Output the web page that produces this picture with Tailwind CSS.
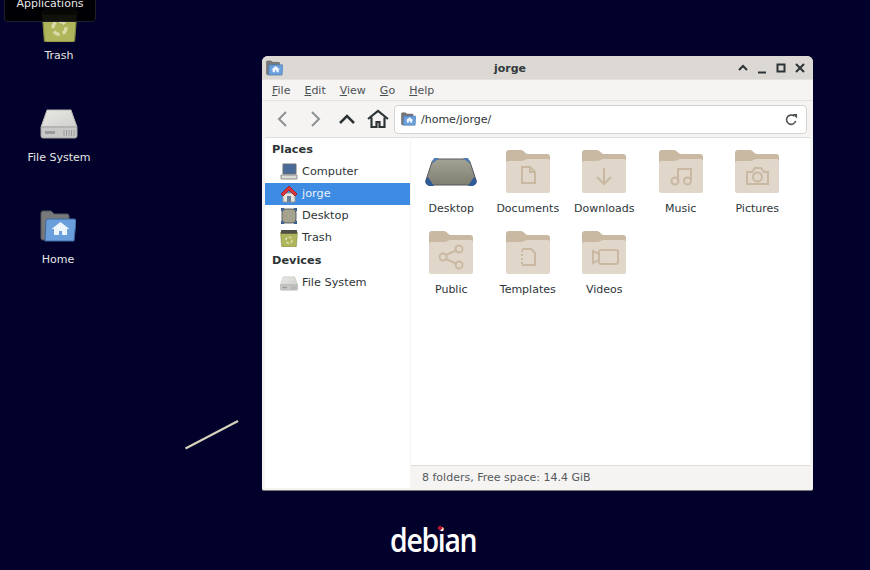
<!DOCTYPE html>
<html lang="en">

<head>
    <meta charset="UTF-8">
    <meta name="viewport" content="width=device-width, initial-scale=1.0">
    <title>jorge - Desktop</title>
    <script src="https://cdn.jsdelivr.net/npm/@tailwindcss/browser@4"></script>
</head>

<body class="relative w-[870px] h-[570px] overflow-hidden bg-[#01012b] font-['DejaVu_Sans',sans-serif] text-[11px]">
    <!-- Shared icons -->
    <svg class="absolute w-0 h-0">
        <defs>
            <linearGradient id="pad" x1="0" y1="0" x2="0" y2="1">
                <stop offset="0" stop-color="#a3a293" />
                <stop offset="1" stop-color="#7f7f72" />
            </linearGradient>
            <linearGradient id="disk" x1="0" y1="0" x2="1" y2="1">
                <stop offset="0" stop-color="#e9e9e5" />
                <stop offset="1" stop-color="#cfcfcb" />
            </linearGradient>
        </defs>
        <symbol id="folder" viewBox="0 0 44 44">
            <path d="M0 4a3 3 0 0 1 3-3h12c3 0 4 4 7 4h19a3 3 0 0 1 3 3v6H0z" fill="#c9b9a3" />
            <path d="M0 14c0-1 1-2 2-2h13c3 0 4-2 7-2h20c1 0 2 1 2 2v30a2 2 0 0 1-2 2H2a2 2 0 0 1-2-2z" fill="#e0d6ca" />
        </symbol>
        <symbol id="home-folder" viewBox="0 0 36 32">
            <path d="M1 3a2 2 0 0 1 2-2h8l3 3h13a2 2 0 0 1 2 2v24H3a2 2 0 0 1-2-2z" fill="#77797a" stroke="#55585a" />
            <path d="M6 11a2 2 0 0 1 2-2h26a2 2 0 0 1 2 2l-2 20H5z" fill="#6a9fdc" stroke="#3f6a9e" />
            <path d="M20.500 12l9 7h-2.500v6h-5v-4h-3v4h-5v-6h-2.500z" fill="#eef4fb" />
        </symbol>
        <symbol id="drive" viewBox="0 0 38 30">
            <path d="M7 1h24l6 17H1z" fill="url(#disk)" stroke="#b5b5b2" />
            <path d="M1 18h36v9a2 2 0 0 1-2 2H3a2 2 0 0 1-2-2z" fill="#c8c8c6" stroke="#a2a2a0" />
            <path d="M5 22h10v3H5z" fill="#9a9b9c" />
            <path d="M24 21v6M26.500 21v6M29 21v6M31.500 21v6M34 21v6" stroke="#9a9b9c" />
        </symbol>
        <symbol id="trash" viewBox="0 0 34 34">
            <path d="M1 6h32l-2 26a2 2 0 0 1-2 2H5a2 2 0 0 1-2-2z" fill="#aeb55a" stroke="#7f843c" />
            <path d="M2 2h30v7H2z" fill="#4e4e45" />
            <circle cx="17" cy="21" r="6" fill="none" stroke="#d9dca8" stroke-width="3" stroke-dasharray="6 3" />
        </symbol>
        <symbol id="desktop-pad" viewBox="0 0 52 30">
            <path d="M11 2h30c2 0 3 1 4 3l6 18c1 3-1 5-4 5H5c-3 0-5-2-4-5L7 5c1-2 2-3 4-3z" fill="url(#pad)" stroke="#55585c" />
            <path d="M9 1h5l-7 6zM43 1h-5l7 6z" fill="#4a7cba" />
            <path d="M1 27c-1-2 0-5 2-7l6 9H4zM51 27c1-2 0-5-2-7l-6 9h5z" fill="#2f5a98" />
        </symbol>
    </svg>

    <!-- Desktop icons -->
    <div class="absolute left-[19px] top-[-2px] w-20 flex flex-col items-center text-[#e6e6e6]">
        <svg class="w-[37px] h-[37px] mt-[7px]"><use href="#trash" /></svg>
        <span class="mt-[6px] leading-[15px]">Trash</span>
    </div>
    <div class="absolute left-[19px] top-[109px] w-20 flex flex-col items-center text-[#e6e6e6]">
        <svg class="w-[38px] h-[30px]"><use href="#drive" /></svg>
        <span class="mt-[11px] leading-[15px]">File System</span>
    </div>
    <div class="absolute left-[18px] top-[210px] w-20 flex flex-col items-center text-[#e6e6e6]">
        <svg class="w-[36px] h-[32px]"><use href="#home-folder" /></svg>
        <span class="mt-[10px] leading-[15px]">Home</span>
    </div>

    <!-- Applications tooltip -->
    <div class="absolute left-[4px] top-[-9px] w-[92px] h-[31px] pt-[4px] bg-black/90 rounded-[4px] border border-[#20202a] text-center text-[#e6e6e6] leading-[15px]">Applications</div>

    <!-- Wallpaper streak and logo -->
    <svg class="absolute left-[180px] top-[415px] w-[64px] h-[40px]" viewBox="0 0 64 40">
        <path d="M5.500 33.500L58 6" stroke="#d8d2bc" stroke-width="2.200" fill="none" />
    </svg>
    <div class="absolute left-[390px] top-[520px] text-white font-['Open_Sans',sans-serif] font-semibold text-[33px] leading-[40px] tracking-[-1.500px] scale-x-[.86] origin-left">debian</div>
    <div class="absolute left-[438px] top-[526px] w-[4px] h-[4px] rotate-45 bg-[#b0162e]"></div>

    <!-- File manager window -->
    <div class="absolute left-[262px] top-[56px] w-[551px] h-[435px] flex flex-col bg-[#f5f4f3] rounded-t-[6px] rounded-b-[2px] border-b border-[#77777a] overflow-hidden text-[#2e3436]">
        <!-- Title bar -->
        <div class="h-[24px] shrink-0 flex items-center px-[4px] bg-[#dcd9d5] border-b border-[#e4e2df]">
            <svg class="w-[17px] h-[16px]"><use href="#home-folder" /></svg>
            <div class="flex-1 text-center font-bold text-[11px] pt-[3px] text-[#33393b]">jorge</div>
            <div class="flex items-center gap-[7px] pr-[3px]">
                <svg class="w-[12px] h-[12px]" viewBox="0 0 12 12"><path d="M2 8l4-4 4 4" fill="none" stroke="#2e3436" stroke-width="2" /></svg>
                <svg class="w-[12px] h-[12px]" viewBox="0 0 12 12"><path d="M2 10.500h8" fill="none" stroke="#2e3436" stroke-width="2" /></svg>
                <svg class="w-[12px] h-[12px]" viewBox="0 0 12 12"><path d="M2.500 2.500h7v7h-7z" fill="none" stroke="#2e3436" stroke-width="2" /></svg>
                <svg class="w-[12px] h-[12px]" viewBox="0 0 12 12"><path d="M2 2l8 8M10 2l-8 8" fill="none" stroke="#2e3436" stroke-width="2" /></svg>
            </div>
        </div>

        <!-- Menu bar -->
        <div class="h-[21px] shrink-0 flex items-center gap-[14px] px-[10px] pt-[2px] border-b border-[#e6e4e2] text-[#4c5153]">
            <span><u>F</u>ile</span>
            <span><u>E</u>dit</span>
            <span><u>V</u>iew</span>
            <span><u>G</u>o</span>
            <span><u>H</u>elp</span>
        </div>

        <!-- Toolbar -->
        <div class="h-[36px] shrink-0 flex items-center pl-[11px] pr-[6px]">
            <svg class="w-[20px] h-[20px]" viewBox="0 0 20 20"><path d="M13 3l-7 7 7 7" fill="none" stroke="#8e9192" stroke-width="2" /></svg>
            <svg class="w-[20px] h-[20px] ml-[12px]" viewBox="0 0 20 20"><path d="M7 3l7 7-7 7" fill="none" stroke="#8e9192" stroke-width="2" /></svg>
            <svg class="w-[20px] h-[20px] ml-[12px]" viewBox="0 0 20 20"><path d="M3 14l7-7 7 7" fill="none" stroke="#2e3436" stroke-width="2.500" /></svg>
            <svg class="w-[22px] h-[20px] ml-[10px]" viewBox="0 0 22 20"><path d="M1 10l10-8 10 8M4.500 8.500V18h5v-5h3v5h5V8.500" fill="none" stroke="#2e3436" stroke-width="2.200" /></svg>
            <div class="ml-[5px] flex-1 h-[29px] flex items-center pl-[6px] pr-[8px] bg-white border border-[#d5d2cf] rounded-[4px]">
                <svg class="w-[15px] h-[14px]"><use href="#home-folder" /></svg>
                <span class="ml-[5px] pt-[2px] flex-1">/home/jorge/</span>
                <svg class="w-[13px] h-[13px]" viewBox="0 0 14 14"><path d="M11.500 8.500A5 5 0 1 1 10 3.500" fill="none" stroke="#4c5153" stroke-width="1.700" /><path d="M8 1h5v5z" fill="#4c5153" /></svg>
            </div>
        </div>

        <!-- Main pane -->
        <div class="flex-1 min-h-0 flex pl-[3px] pr-[3px] pb-[2px]">
            <!-- Sidebar -->
            <aside class="w-[145px] shrink-0 bg-white border-t border-[#e0dedb] pt-[1px] text-[11.300px]">
                <div class="h-[22px] flex items-center pl-[7px] font-bold text-[#2e3436]">Places</div>
                <div class="h-[22px] flex items-center pl-[15px] gap-[4px]">
                    <svg class="w-[18px] h-[18px]" viewBox="0 0 18 18"><path d="M3 1h13v10H3z" fill="#4a6a9a" stroke="#6c6f70" /><path d="M1 12h16v4H1z" fill="#dcdcd8" stroke="#8a8c8c" /></svg>
                    <span>Computer</span>
                </div>
                <div class="h-[22px] flex items-center pl-[15px] gap-[4px] bg-[#3d8be2] text-[#e8f1fb]">
                    <svg class="w-[18px] h-[18px]" viewBox="0 0 18 18"><path d="M3 8h12v9H3z" fill="#e5e3dc" stroke="#9a9a96" /><path d="M9 1l8 8-2 2-6-6-6 6-2-2z" fill="#d9363e" stroke="#a52328" /><path d="M7 11h4v6H7z" fill="#6a7f96" /></svg>
                    <span>jorge</span>
                </div>
                <div class="h-[22px] flex items-center pl-[15px] gap-[4px]">
                    <svg class="w-[18px] h-[18px]" viewBox="0 0 18 18"><rect x="2" y="2" width="14" height="14" rx="4" fill="#a5a38e" stroke="#5c6066" /><path d="M1 1h4L1 5zM17 1h-4l4 4zM1 17h4l-4-4zM17 17h-4l4-4z" fill="#3e5f8f" /></svg>
                    <span>Desktop</span>
                </div>
                <div class="h-[22px] flex items-center pl-[15px] gap-[4px]">
                    <svg class="w-[18px] h-[18px]"><use href="#trash" /></svg>
                    <span>Trash</span>
                </div>
                <div class="h-[23px] pt-[1px] flex items-center pl-[7px] font-bold text-[#2e3436]">Devices</div>
                <div class="h-[22px] flex items-center pl-[15px] gap-[4px]">
                    <svg class="w-[18px] h-[15px]"><use href="#drive" /></svg>
                    <span>File System</span>
                </div>
            </aside>

            <!-- Content -->
            <div class="flex-1 min-w-0 ml-px flex flex-col">
                <div class="flex-1 bg-white border-t border-[#e0dedb] pl-[2px] pt-[11px] grid grid-cols-[repeat(5,76.500px)] auto-rows-[81px]">
                    <div class="flex flex-col items-center">
                        <svg class="w-[52px] h-[30px] mt-[8px] mb-[14px]"><use href="#desktop-pad" /></svg>
                        <span class="leading-[15px]">Desktop</span>
                    </div>
                    <div class="flex flex-col items-center">
                        <svg class="w-[44px] h-[44px]" viewBox="0 0 44 44"><use href="#folder" /><path d="M16 18h8l5 5v11H16zM24 18v5h5" fill="none" stroke="#c9b9a3" stroke-width="2" /></svg>
                        <span class="mt-[8px] leading-[15px]">Documents</span>
                    </div>
                    <div class="flex flex-col items-center">
                        <svg class="w-[44px] h-[44px]" viewBox="0 0 44 44"><use href="#folder" /><path d="M22 19v16M15 28l7 7 7-7" fill="none" stroke="#c9b9a3" stroke-width="2" /></svg>
                        <span class="mt-[8px] leading-[15px]">Downloads</span>
                    </div>
                    <div class="flex flex-col items-center">
                        <svg class="w-[44px] h-[44px]" viewBox="0 0 44 44"><use href="#folder" /><path d="M19 32V20h13v12" fill="none" stroke="#c9b9a3" stroke-width="2" /><circle cx="16" cy="32" r="3.500" fill="none" stroke="#c9b9a3" stroke-width="2" /><circle cx="28.500" cy="32" r="3.500" fill="none" stroke="#c9b9a3" stroke-width="2" /></svg>
                        <span class="mt-[8px] leading-[15px]">Music</span>
                    </div>
                    <div class="flex flex-col items-center">
                        <svg class="w-[44px] h-[44px]" viewBox="0 0 44 44"><use href="#folder" /><path d="M12 23h5l3-4h6l3 4h4v12H12z" fill="none" stroke="#c9b9a3" stroke-width="2" /><circle cx="22.500" cy="28" r="4.500" fill="none" stroke="#c9b9a3" stroke-width="2" /></svg>
                        <span class="mt-[8px] leading-[15px]">Pictures</span>
                    </div>
                    <div class="flex flex-col items-center">
                        <svg class="w-[44px] h-[44px]" viewBox="0 0 44 44"><use href="#folder" /><path d="M17 25l11-5M17 29l11 5" fill="none" stroke="#c9b9a3" stroke-width="2" /><circle cx="14" cy="27" r="3.500" fill="none" stroke="#c9b9a3" stroke-width="2" /><circle cx="30" cy="19" r="3.500" fill="none" stroke="#c9b9a3" stroke-width="2" /><circle cx="30" cy="35" r="3.500" fill="none" stroke="#c9b9a3" stroke-width="2" /></svg>
                        <span class="mt-[8px] leading-[15px]">Public</span>
                    </div>
                    <div class="flex flex-col items-center">
                        <svg class="w-[44px] h-[44px]" viewBox="0 0 44 44"><use href="#folder" /><path d="M16 19h9l4 4v12H16" fill="none" stroke="#c9b9a3" stroke-width="2" /><path d="M16 20v15" fill="none" stroke="#c9b9a3" stroke-width="2" stroke-dasharray="2 2" /></svg>
                        <span class="mt-[8px] leading-[15px]">Templates</span>
                    </div>
                    <div class="flex flex-col items-center">
                        <svg class="w-[44px] h-[44px]" viewBox="0 0 44 44"><use href="#folder" /><rect x="17" y="20" width="19" height="14" rx="2" fill="none" stroke="#c9b9a3" stroke-width="2" /><path d="M17 24l-6-3v12l6-3" fill="none" stroke="#c9b9a3" stroke-width="2" /></svg>
                        <span class="mt-[8px] leading-[15px]">Videos</span>
                    </div>
                </div>
                <!-- Status bar -->
                <div class="h-[23px] pt-[2px] shrink-0 flex items-center pl-[11px] border-t border-[#dfdddb] text-[#55595b]">8 folders, Free space: 14.4 GiB</div>
            </div>
        </div>
    </div>
</body>

</html>
